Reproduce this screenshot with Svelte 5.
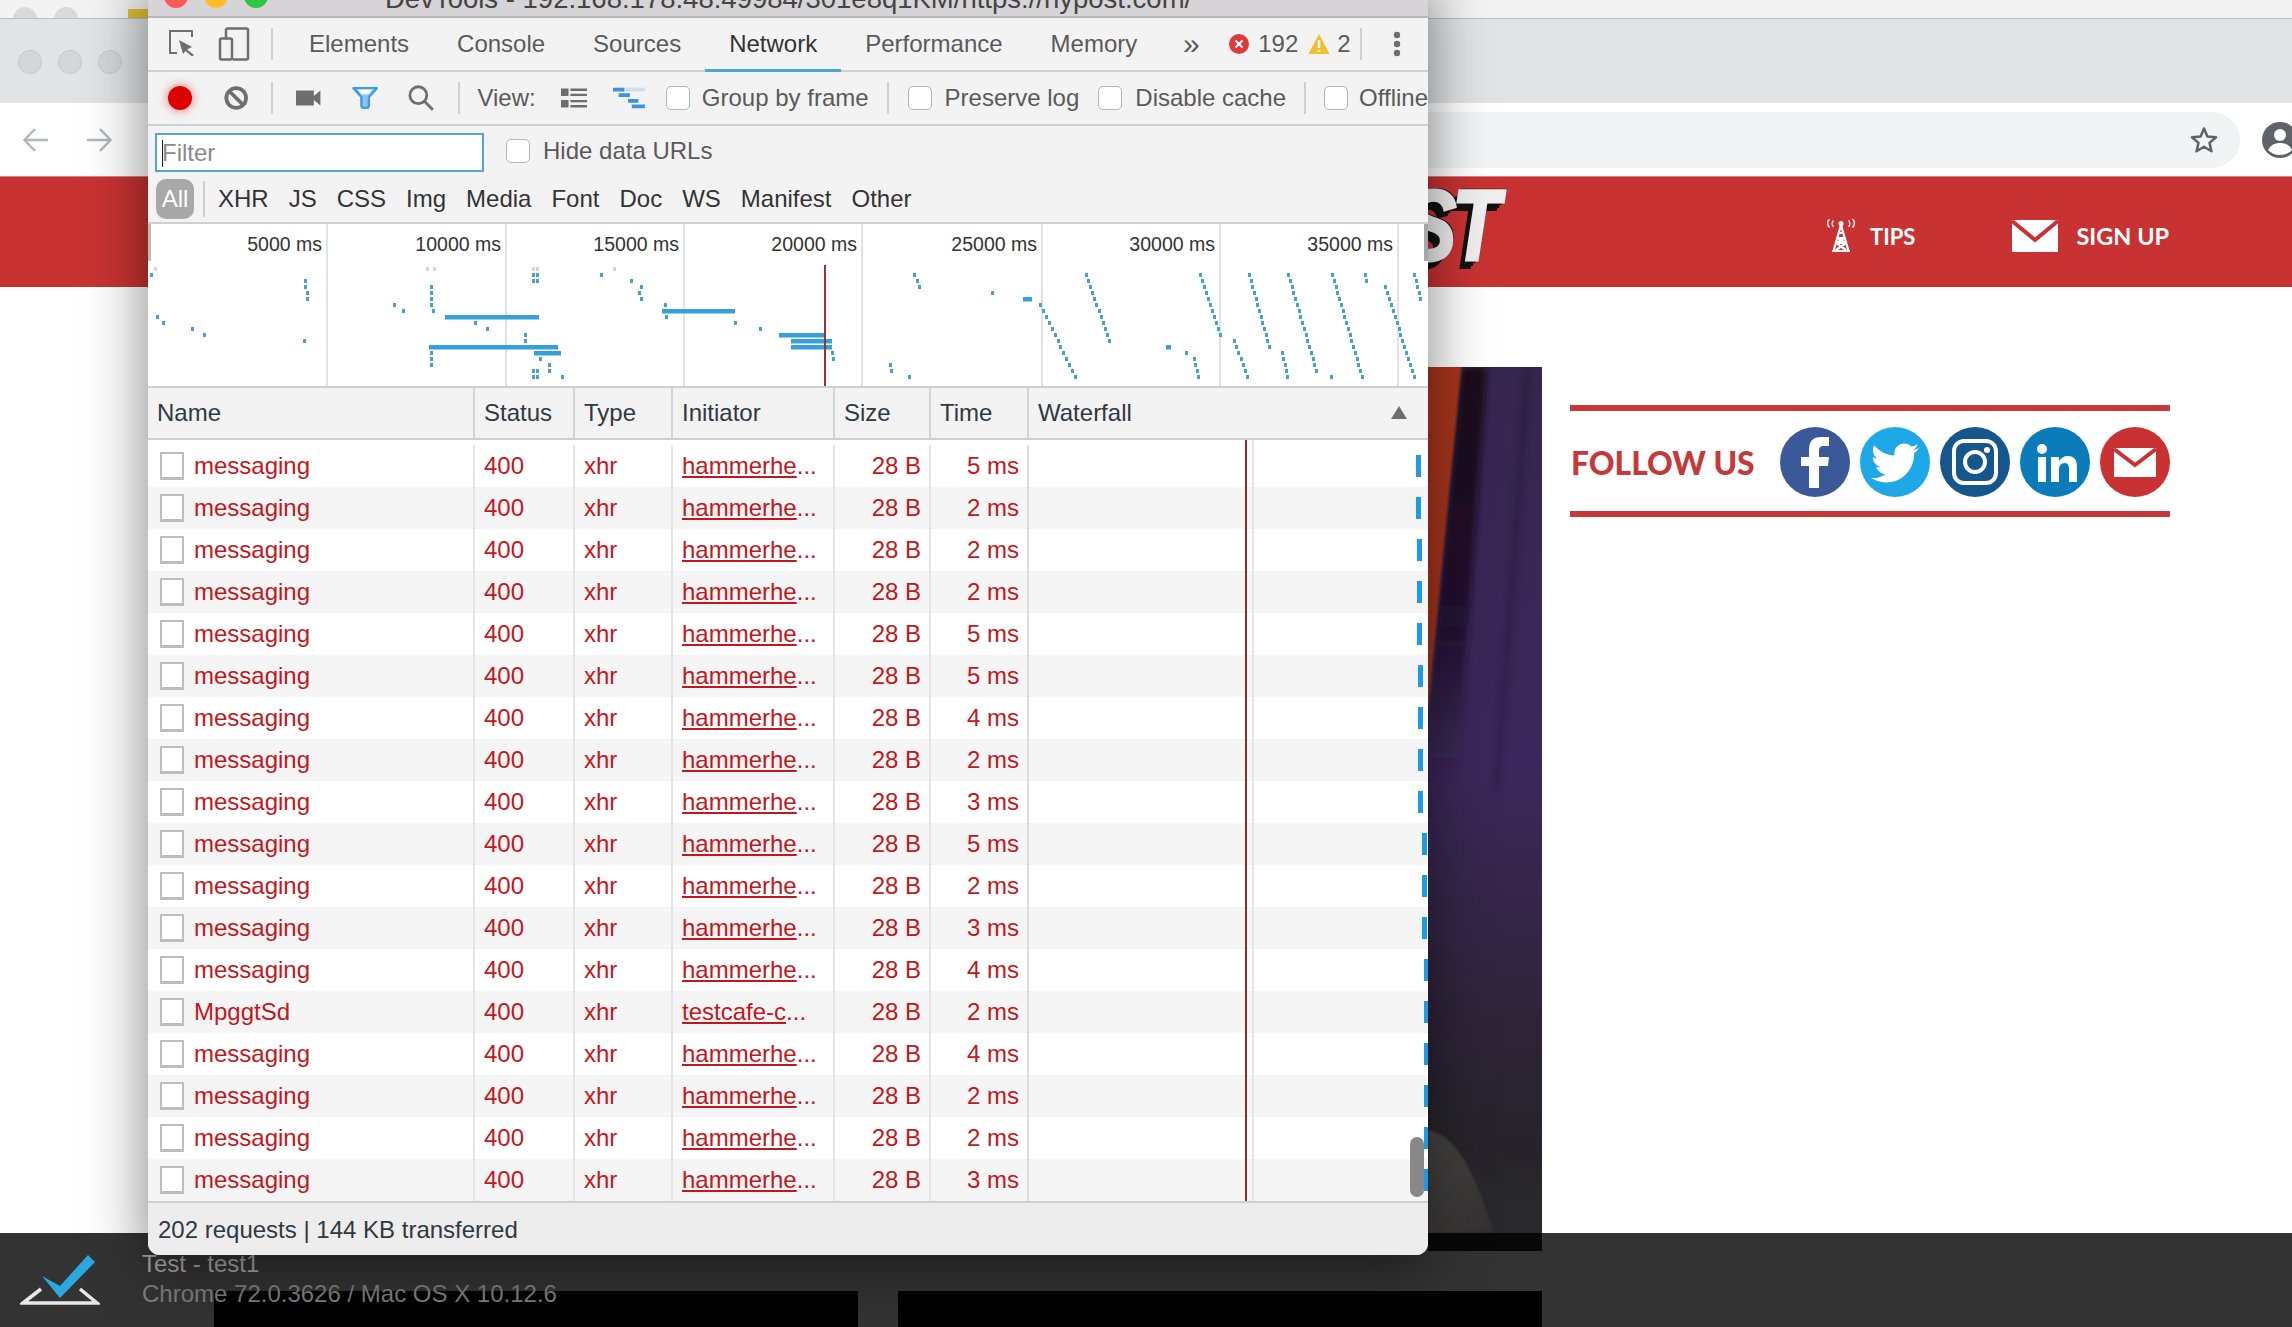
<script>
  const tabs = ["Elements", "Console", "Sources", "Network", "Performance", "Memory"];
  const types = ["XHR", "JS", "CSS", "Img", "Media", "Font", "Doc", "WS", "Manifest", "Other"];
  const times = [5, 2, 2, 2, 5, 5, 4, 2, 3, 5, 2, 3, 4, 2, 4, 2, 2, 3];

  const rows = times.map((time, i) => ({
    name: i === 13 ? "MpggtSd" : "messaging",
    initiator: i === 13 ? "testcafe-c" : "hammerhe",
    time,
    tick: i < 2 ? 1268 : i < 5 ? 1269 : i < 9 ? 1270 : i < 12 ? 1274 : 1276,
  }));

  // overview timeline lanes are 6px apart
  const laneY = (k) => 267 + k * 6;

  // left half of the overview: [lane, page x]
  const leftDots = [
    [1, 150], [1, 532], [1, 536], [1, 600],
    [2, 304], [2, 532], [2, 536], [2, 630],
    [3, 304], [3, 430], [3, 640],
    [4, 306], [4, 430], [4, 638],
    [5, 306], [5, 430], [5, 640],
    [6, 393], [6, 430], [6, 664],
    [7, 402], [7, 432],
    [8, 156], [8, 665],
    [9, 162], [9, 474], [9, 734],
    [10, 191], [10, 486], [10, 759],
    [11, 203], [11, 524],
    [12, 303], [12, 524],
    [14, 430], [14, 831],
    [15, 430], [15, 539], [15, 832],
    [16, 430], [16, 548],
    [17, 532], [17, 536], [17, 548],
    [18, 532], [18, 536], [18, 561],
  ];

  // right half: diagonal runs of requests [x1, lane1, x2, lane2]
  const runs = [
    [913, 1, 918, 3],
    [1085, 1, 1108, 12],
    [1199, 1, 1219, 11],
    [1248, 1, 1268, 13],
    [1287, 1, 1315, 17],
    [1331, 1, 1361, 18],
    [1364, 1, 1365, 2],
    [1384, 3, 1413, 18],
    [1413, 1, 1419, 5],
    [1039, 6, 1074, 18],
    [1233, 12, 1246, 18],
    [1281, 14, 1286, 18],
    [1193, 15, 1197, 18],
    [889, 16, 890, 17],
    [1185, 14, 1185, 14],
    [991, 4, 991, 4],
    [908, 18, 908, 18],
    [1330, 18, 1330, 18],
    [831, 14, 832, 15],
  ];
  const runDots = runs.flatMap(([x1, k1, x2, k2]) => {
    const out = [];
    for (let k = k1; k <= k2; k++) {
      out.push([k, Math.round(x1 + ((x2 - x1) * (k - k1)) / Math.max(k2 - k1, 1))]);
    }
    return out;
  });

  const bars = [
    [7, 662, 735],
    [8, 445, 539],
    [5, 1023, 1032],
    [11, 779, 825],
    [12, 791, 832],
    [13, 429, 558],
    [13, 791, 832],
    [13, 1166, 1171],
    [14, 534, 561],
  ];
  const greyDots = [154, 426, 433, 532, 536, 613];
  const marks = [
    [326, "5000 ms"],
    [505, "10000 ms"],
    [683, "15000 ms"],
    [861, "20000 ms"],
    [1041, "25000 ms"],
    [1219, "30000 ms"],
    [1397, "35000 ms"],
  ];
</script>

<div class="page">
  <div class="back-strip">
    <i class="ghost"></i>
    <i class="ghost"></i>
    <i class="tag"></i>
  </div>
  <div class="tab-strip">
    <i class="light"></i>
    <i class="light"></i>
    <i class="light"></i>
  </div>
  <div class="browser-bar">
    <svg class="nav" viewBox="0 0 28 26"><path d="M26 13H3M13 2 2.500 13 13 24" /></svg>
    <svg class="nav forward" viewBox="0 0 28 26"><path d="M2 13h23M15 2l10.500 11L15 24" /></svg>
    <div class="address">
      <svg class="star" viewBox="0 0 30 30"><path d="M15 3.500l3.400 8 8.600.7-6.500 5.700 2 8.400L15 21.800l-7.500 4.500 2-8.400L3 12.200l8.600-.7z" /></svg>
    </div>
    <svg class="profile" viewBox="0 0 36 36"><circle cx="18" cy="18" r="18" fill="#5f6368" /><circle cx="18" cy="13" r="6" fill="#fff" /><path d="M6 28c3-6 8-7 12-7s9 1 12 7c-3 3-7 5-12 5s-9-2-12-5z" fill="#fff" /></svg>
  </div>

  <header class="site-head">
    <div class="logo">POST</div>
    <svg class="tower" viewBox="0 0 30 34">
      <path class="wave" d="M3.500 1C1 3.500 1 7 3.500 9.500M7.500 2.500c-1.800 1.800-1.800 4.500 0 6.300M26.500 1C29 3.500 29 7 26.500 9.500M22.500 2.500c1.800 1.800 1.800 4.500 0 6.300" />
      <circle cx="15" cy="5.500" r="2.500" fill="#fff" />
      <path class="mast" d="M15 7 7.500 33M15 7l7.500 26M12.500 15h5M11.500 20h7M10 25h10M10 25l10 7M20 25l-10 7M12 20l7 5M18 20l-7 5M6 33h18" />
    </svg>
    <span class="tips">TIPS</span>
    <svg class="envelope" viewBox="0 0 46 32"><path fill="#fff" d="M0 0h46v32H0z" /><path d="M0 1l23 19L46 1" fill="none" stroke="#c93232" stroke-width="4" /></svg>
    <span class="sign-up">SIGN UP</span>
  </header>

  <main class="content">
    <div class="media">
      <svg class="photo" viewBox="1428 367 114 884" preserveAspectRatio="none">
        <defs>
          <linearGradient id="cloth" x1="0" y1="0" x2="0" y2="1">
            <stop offset="0" stop-color="#36264f" />
            <stop offset="0.45" stop-color="#3c285c" />
            <stop offset="0.72" stop-color="#2f243a" />
            <stop offset="0.88" stop-color="#26242a" />
            <stop offset="1" stop-color="#2a2a2c" />
          </linearGradient>
          <linearGradient id="band" x1="0" y1="0" x2="0" y2="1">
            <stop offset="0" stop-color="#1d0b18" />
            <stop offset="0.6" stop-color="#221231" />
            <stop offset="1" stop-color="#2a1e3c" stop-opacity="0" />
          </linearGradient>
          <linearGradient id="fold" x1="0" y1="0" x2="1" y2="1">
            <stop offset="0" stop-color="#484442" />
            <stop offset="1" stop-color="#323133" />
          </linearGradient>
          <filter id="soft"><feGaussianBlur stdDeviation="3" /></filter>
          <filter id="soft-edge"><feGaussianBlur stdDeviation="1" /></filter>
        </defs>
        <rect x="1428" y="367" width="114" height="884" fill="url(#cloth)" />
        <path d="M1461 367h26l-30 420h-29V716z" fill="url(#band)" filter="url(#soft)" />
        <path d="M1420 360h42l-34 350-8 10z" fill="#a8351c" filter="url(#soft-edge)" />
        <path d="M1524 367h8l-32 420h-6z" fill="#1c1530" opacity="0.4" filter="url(#soft)" />
        <path d="M1428 1130c26 6 42 30 66 102l-66 1z" fill="url(#fold)" filter="url(#soft-edge)" />
      </svg>
      <div class="thumbs">
        <div class="thumb"></div>
        <div class="thumb"></div>
      </div>
    </div>

    <aside class="follow">
      <span class="follow-label">FOLLOW US</span>
      <svg class="social fb" viewBox="0 0 70 70"><circle cx="35" cy="35" r="35" /><path fill="#fff" d="M29 61V39h-8v-9h8v-7c0-9 4-13 12-13h8v9h-5c-4 0-5 2-5 5v6h10l-1 9h-9v22z" /></svg>
      <svg class="social tw" viewBox="0 0 70 70"><circle cx="35" cy="35" r="35" /><g transform="translate(11 12) scale(2)"><path fill="#fff" d="M23.954 4.569c-.885.389-1.830.654-2.825.775 1.014-.611 1.794-1.574 2.163-2.723-.951.555-2.005.959-3.127 1.184-.896-.959-2.173-1.559-3.591-1.559-2.717 0-4.920 2.203-4.920 4.917 0 .39.045.765.127 1.124C7.691 8.094 4.066 6.130 1.640 3.161c-.427.722-.666 1.561-.666 2.475 0 1.710.87 3.213 2.188 4.096-.807-.026-1.566-.248-2.228-.616v.061c0 2.385 1.693 4.374 3.946 4.827-.413.111-.849.171-1.296.171-.314 0-.615-.03-.916-.086.631 1.953 2.445 3.377 4.604 3.417-1.680 1.319-3.809 2.105-6.102 2.105-.39 0-.779-.023-1.170-.067 2.189 1.394 4.768 2.209 7.557 2.209 9.054 0 13.999-7.496 13.999-13.986 0-.209 0-.42-.015-.63.961-.689 1.800-1.560 2.460-2.548l-.047-.02z" /></g></svg>
      <svg class="social ig" viewBox="0 0 70 70"><circle cx="35" cy="35" r="35" /><g fill="none" stroke="#fff" stroke-width="4"><rect x="14" y="14" width="42" height="42" rx="10" /><circle cx="35" cy="35" r="10" /></g><circle cx="47" cy="23" r="3" fill="#fff" /></svg>
      <svg class="social li" viewBox="0 0 70 70"><circle cx="35" cy="35" r="35" /><g fill="#fff"><circle cx="22" cy="22" r="5" /><rect x="18" y="30" width="8" height="25" /><path d="M31 30h8v4c2-3 5-5 9-5 7 0 9 5 9 11v15h-8V42c0-3-1-6-4-6-4 0-6 3-6 6v13h-8z" /></g></svg>
      <svg class="social ml" viewBox="0 0 70 70"><circle cx="35" cy="35" r="35" /><path fill="#fff" d="M14 21h42v29H14z" /><path d="M14 22l21 16 21-16" fill="none" stroke="#c93232" stroke-width="4" /></svg>
    </aside>
  </main>

  <div class="run-bar">
    <svg class="run-logo" viewBox="0 0 80 50">
      <path d="M21 34 3 48h74L60 34" fill="none" stroke="#e8e8e8" stroke-width="3.500" />
      <path d="M22 21 40 31 68 0l7 7-35 36z" fill="#2ba8e0" />
    </svg>
    <div class="run-text">
      <div class="run-name">Test - test1</div>
      <div class="run-browser">Chrome 72.0.3626 / Mac OS X 10.12.6</div>
    </div>
  </div>

  <section class="devtools">
    <div class="title-bar">
      <i class="dot red"></i>
      <i class="dot amber"></i>
      <i class="dot green"></i>
      <span class="title">DevTools - 192.168.178.48:49984/301e8q1KM/https://nypost.com/</span>
    </div>

    <nav class="tab-row">
      <svg class="inspect" viewBox="0 0 28 30">
        <path d="M9 24H2V2h22v6" fill="none" stroke="#6e6e6e" stroke-width="2" stroke-linejoin="round" />
        <path d="M11 11l13 7-5 2.500 7 5.500-2 1.500-6.500-5.500-2.500 3z" fill="#6e6e6e" />
      </svg>
      <svg class="device" viewBox="0 0 32 34">
        <path d="M8 11V3c0-.8.6-1.500 1.500-1.500h19c.8 0 1.500.7 1.500 1.500v28c0 .8-.7 1.500-1.500 1.500H15" fill="none" stroke="#6e6e6e" stroke-width="2.500" />
        <rect x="2" y="11.500" width="12" height="21" rx="1.500" fill="none" stroke="#6e6e6e" stroke-width="2.500" />
      </svg>
      <i class="sep first"></i>
      {#each tabs as tab}
        <span class="tab" class:active={tab === "Network"}>{tab}</span>
      {/each}
      <span class="more">»</span>
      <svg class="err" viewBox="0 0 20 20"><circle cx="10" cy="10" r="10" fill="#e0393c" /><path d="M6.500 6.500l7 7m0-7l-7 7" stroke="#fff" stroke-width="2" /></svg>
      <span class="count">192</span>
      <svg class="warn" viewBox="0 0 22 22"><path d="M11 1 21.500 21H.5z" fill="#f4bd2a" /><path d="M11 7v8m0 2v2" stroke="#fff" stroke-width="2.500" /></svg>
      <span class="count warned">2</span>
      <i class="sep after-count"></i>
      <svg class="kebab" viewBox="0 0 8 26"><circle cx="4" cy="4" r="3.200" /><circle cx="4" cy="13" r="3.200" /><circle cx="4" cy="22" r="3.200" /></svg>
    </nav>

    <div class="tool-row">
      <i class="record"></i>
      <svg class="clear" viewBox="0 0 26 26"><circle cx="13" cy="13" r="10.500" /><path d="M5.500 5.500l15 15" /></svg>
      <i class="sep s1"></i>
      <svg class="camera" viewBox="0 0 26 16"><path d="M0 0h19v16H0zM19 6l7-6v16l-7-6z" fill="#6e6e6e" /></svg>
      <svg class="filter" viewBox="0 0 28 24"><path d="M1.500 1.500h25L18 11v9c0 1.500-1 2.500-2.500 2.500h-3C11 22.500 10 21.500 10 20v-9z" fill="#8cc4f5" stroke="#3f9be8" stroke-width="2.500" stroke-linejoin="round" /><path d="M6 3h16l-4 5h-8z" fill="#fff" /></svg>
      <svg class="search" viewBox="0 0 28 28"><circle cx="11" cy="11" r="9" /><path d="M17.500 17.500l9 9" /></svg>
      <i class="sep s2"></i>
      <span class="view-label">View:</span>
      <svg class="list-view" viewBox="0 0 28 20" fill="#6e6e6e"><path d="M0 0h8v8H0zM0 12h8v8H0zM10 0h18v2.500H10zM10 5.500h18V8H10zM10 12h18v2.500H10zM10 17.500h18V20H10z" /></svg>
      <svg class="fall-view" viewBox="0 0 34 22"><path d="M12 0h22v4H12z" fill="#c9dff2" /><path d="M0 0h12v4H0zM6 6h12v4H6zM16 12h11v4H16zM20 18h14v4H20z" fill="#3f93d8" /></svg>
      <label class="check group"><i class="box"></i>Group by frame</label>
      <i class="sep s3"></i>
      <label class="check preserve"><i class="box"></i>Preserve log</label>
      <label class="check disable"><i class="box"></i>Disable cache</label>
      <i class="sep s4"></i>
      <label class="check offline"><i class="box"></i>Offline</label>
    </div>

    <div class="filter-row">
      <div class="filter-input"><i class="caret"></i>Filter</div>
      <label class="check hide-urls"><i class="box"></i>Hide data URLs</label>
    </div>

    <div class="type-row">
      <span class="all">All</span>
      <i class="sep s5"></i>
      {#each types as type}
        <span class="type">{type}</span>
      {/each}
    </div>

    <svg class="overview" viewBox="148 224 1280 162">
      <rect x="148" y="224" width="1280" height="162" fill="#fff" />
      <rect x="148" y="224" width="3" height="37" fill="#b9b9b9" />
      <rect x="1424" y="224" width="4" height="37" fill="#a6a6a6" />
      {#each marks as [x, label]}
        <rect {x} y="224" width="2" height="162" fill="#e2e2e2" />
        <text x={x - 4} y="251" text-anchor="end">{label}</text>
      {/each}
      {#each greyDots as x}
        <rect {x} y="267" width="3" height="4" fill="#d6d6d6" />
      {/each}
      {#each leftDots as [k, x]}
        <rect {x} y={laneY(k)} width="3" height="4" fill="#45a3c6" />
      {/each}
      {#each runDots as [k, x]}
        <rect {x} y={laneY(k)} width="3" height="4" fill="#45a3c6" />
      {/each}
      {#each bars as [k, from, to]}
        <rect x={from} y={laneY(k)} width={to - from} height="4.500" fill="#37a0d9" />
      {/each}
      <rect x="824" y="265" width="2" height="121" fill="#9b2f31" />
    </svg>

    <div class="grid head">
      <span>Name</span>
      <span>Status</span>
      <span>Type</span>
      <span>Initiator</span>
      <span>Size</span>
      <span>Time</span>
      <span class="fall-head">Waterfall<i class="sort"></i></span>
    </div>

    <div class="table-body">
      {#each rows as row}
        <div class="grid row">
          <span class="name-cell"><i class="doc"></i>{row.name}</span>
          <span>400</span>
          <span>xhr</span>
          <span><u>{row.initiator}</u>...</span>
          <span class="num">28 B</span>
          <span class="num">{row.time} ms</span>
          <span class="fall-cell"><i class="tick" style="left: {row.tick - 881}px"></i></span>
        </div>
      {/each}
      <i class="load-line"></i>
      <i class="dom-line"></i>
      <i class="scroll-thumb"></i>
    </div>

    <footer class="status-bar">202 requests | 144 KB transferred</footer>
  </section>
</div>

<style>
  :global(body) {
    margin: 0;
    font-family: "Liberation Sans", Arial, sans-serif;
  }

  i {
    display: block;
    flex: none;
  }

  .page {
    position: relative;
    display: flex;
    flex-direction: column;
    width: 2292px;
    height: 1327px;
    overflow: hidden;
    background: #fff;
  }

  .back-strip {
    display: flex;
    flex: none;
    box-sizing: border-box;
    height: 19px;
    padding: 7px 0 0 13px;
    gap: 17px;
    overflow: hidden;
    background: #f3f3f3;
    border-bottom: 1px solid #bdbdbd;
  }

  .ghost {
    width: 24px;
    height: 24px;
    border-radius: 50%;
    background: #d9d9d9;
  }

  .tag {
    width: 30px;
    height: 12px;
    margin: 2px 0 0 33px;
    background: #e0c234;
  }

  .tab-strip {
    display: flex;
    flex: none;
    box-sizing: border-box;
    height: 84px;
    padding: 31px 0 0 18px;
    gap: 16px;
    background: #e0e4e7;
  }

  .light {
    box-sizing: border-box;
    width: 24px;
    height: 24px;
    border-radius: 50%;
    background: #d4d6d8;
    border: 1px solid #c6c8ca;
  }

  .browser-bar {
    display: flex;
    flex: none;
    align-items: center;
    height: 73px;
    padding-left: 22px;
  }

  .nav {
    width: 28px;
    height: 26px;
    fill: none;
    stroke: #b3b6b9;
    stroke-width: 2.500;
  }

  .forward {
    margin-left: 35px;
  }

  .address {
    display: flex;
    flex: 1;
    align-items: center;
    justify-content: flex-end;
    height: 56px;
    margin-left: 60px;
    padding-right: 21px;
    background: #f1f3f4;
    border-radius: 28px;
  }

  .star {
    width: 30px;
    height: 30px;
    fill: none;
    stroke: #5f6368;
    stroke-width: 2.500;
    stroke-linejoin: round;
  }

  .profile {
    flex: none;
    width: 36px;
    height: 36px;
    margin: 0 -6px 0 22px;
  }

  .site-head {
    display: flex;
    flex: none;
    align-items: center;
    box-sizing: border-box;
    height: 111px;
    background: #c93232;
    border-top: 1px solid #dd8080;
  }

  .logo {
    width: 320px;
    margin: 0 0 14px 1176px;
    text-align: right;
    font-size: 100px;
    font-weight: 700;
    font-style: italic;
    letter-spacing: -5px;
    line-height: 90px;
    color: #f0f0f0;
    -webkit-text-stroke: 3px #f0f0f0;
    text-shadow:
      2px -2px 0 #111,
      -3px 3px 0 #111,
      -6px 6px 0 #111,
      -9px 9px 0 #111;
    transform: scaleX(0.78);
    transform-origin: right center;
  }

  .tower {
    width: 30px;
    height: 34px;
    margin: 6px 0 0 330px;
  }

  .wave {
    fill: none;
    stroke: #fff;
    stroke-width: 1.400;
  }

  .mast {
    fill: none;
    stroke: #fff;
    stroke-width: 2.200;
  }

  .tips,
  .sign-up {
    font-family: Lato, "Liberation Sans", sans-serif;
    font-weight: 700;
    color: #fff;
    font-size: 22px;
  }

  .tips {
    margin: 8px 0 0 14px;
  }

  .envelope {
    width: 46px;
    height: 32px;
    margin: 8px 0 0 97px;
  }

  .sign-up {
    margin: 8px 0 0 18px;
    font-size: 23.500px;
  }

  .content {
    display: flex;
    flex: 1;
    min-height: 0;
    padding: 80px 0 0 214px;
    background: #fff;
  }

  .media {
    display: flex;
    flex-direction: column;
    flex: none;
    width: 1328px;
    align-items: flex-end;
    gap: 40px;
  }

  .photo {
    flex: none;
    width: 114px;
    height: 884px;
  }

  .thumbs {
    display: flex;
    gap: 40px;
  }

  .thumb {
    width: 644px;
    height: 120px;
    background: #000;
  }

  .follow {
    display: flex;
    align-items: center;
    box-sizing: border-box;
    width: 600px;
    height: 112px;
    margin: 38px 0 0 28px;
    padding-top: 2px;
    gap: 10px;
    border-top: 6px solid #c5393a;
    border-bottom: 6px solid #c5393a;
  }

  .follow-label {
    box-sizing: border-box;
    width: 205px;
    padding: 2px 0 0 1px;
    font-family: Lato, "Liberation Sans", sans-serif;
    font-weight: 900;
    font-size: 31.800px;
    white-space: nowrap;
    color: #c5393a;
  }

  .social {
    width: 70px;
    height: 70px;
    flex: none;
  }

  .fb { fill: #3b5998; }
  .tw { fill: #1ea8e8; }
  .ig { fill: #15568c; }
  .li { fill: #0a7cba; }
  .ml { fill: #c93232; }

  .run-bar {
    position: absolute;
    left: 0;
    right: 0;
    bottom: 0;
    display: flex;
    height: 94px;
    background: rgba(0, 0, 0, 0.8);
  }

  .run-logo {
    flex: none;
    width: 80px;
    height: 50px;
    margin: 22px 0 0 20px;
  }

  .run-text {
    margin-left: 42px;
    padding-top: 16px;
    font-size: 24px;
    line-height: 30px;
  }

  .run-name {
    color: #a8a8a8;
  }

  .run-browser {
    color: #7e7e7e;
  }

  .devtools {
    position: absolute;
    left: 148px;
    top: -30px;
    display: flex;
    flex-direction: column;
    width: 1280px;
    height: 1285px;
    overflow: hidden;
    font-size: 24px;
    color: #5a5a5a;
    background: #f3f3f3;
    border-radius: 12px;
    box-shadow: 0 12px 60px rgba(0, 0, 0, 0.5);
  }

  .title-bar {
    position: relative;
    display: flex;
    flex: none;
    align-items: center;
    box-sizing: border-box;
    height: 48px;
    padding: 6px 0 0 16px;
    gap: 16px;
    background: #d6d4d6;
    border-bottom: 2px solid #b8b8b8;
  }

  .dot {
    width: 24px;
    height: 24px;
    border-radius: 50%;
  }

  .red { background: #fc5b57; }
  .amber { background: #febb2c; }
  .green { background: #2ac83f; }

  .title {
    margin: 6px 0 0 101px;
    font-size: 27.500px;
    white-space: nowrap;
    color: #444;
  }

  .tab-row,
  .tool-row {
    display: flex;
    flex: none;
    align-items: center;
    box-sizing: border-box;
    height: 54px;
    border-bottom: 2px solid #cfcfcf;
    white-space: nowrap;
  }

  .inspect {
    width: 28px;
    height: 30px;
    margin-left: 20px;
  }

  .device {
    width: 32px;
    height: 34px;
    margin-left: 22px;
  }

  .sep {
    width: 2px;
    height: 32px;
    background: #cfcfcf;
  }

  .sep.first {
    margin: 0 12px 0 21px;
  }

  .tab {
    align-self: stretch;
    box-sizing: border-box;
    padding: 0 24px;
    margin-bottom: -2px;
    line-height: 52px;
    font-size: 24px;
  }

  .active {
    color: #333;
    border-bottom: 3px solid #4ba6dc;
  }

  .more {
    width: 30px;
    margin-left: 15px;
    font-size: 30px;
    line-height: 40px;
    text-align: center;
    color: #5a5a5a;
  }

  .err {
    width: 20px;
    height: 20px;
    margin-left: 23px;
  }

  .count {
    margin-left: 9px;
    font-size: 24px;
  }

  .warn {
    width: 22px;
    height: 22px;
    margin-left: 10px;
  }

  .warned {
    margin-left: 7px;
  }

  .sep.after-count {
    margin-left: 9px;
  }

  .kebab {
    width: 8px;
    height: 26px;
    margin-left: 31px;
    fill: #6e6e6e;
  }

  .record {
    width: 24px;
    height: 24px;
    margin-left: 20px;
    border-radius: 50%;
    background: #dc0000;
    box-shadow: 0 0 8px 2px rgba(220, 0, 0, 0.35);
  }

  .clear {
    width: 26px;
    height: 26px;
    margin-left: 32px;
    fill: none;
    stroke: #6e6e6e;
    stroke-width: 4;
  }

  .sep.s1 { margin-left: 23px; }
  .sep.s2 { margin-left: 24px; }
  .sep.s3 { margin-left: 18px; }
  .sep.s4 { margin-left: 18px; }

  .camera {
    width: 26px;
    height: 16px;
    margin-left: 23px;
  }

  .filter {
    width: 28px;
    height: 24px;
    margin-left: 31px;
  }

  .search {
    width: 28px;
    height: 28px;
    margin-left: 30px;
    fill: none;
    stroke: #6e6e6e;
    stroke-width: 3;
  }

  .view-label {
    margin-left: 17px;
    font-size: 24px;
  }

  .list-view {
    width: 28px;
    height: 20px;
    margin-left: 25px;
  }

  .fall-view {
    width: 34px;
    height: 22px;
    margin-left: 26px;
  }

  .check {
    display: flex;
    align-items: center;
    font-size: 24px;
    gap: 13px;
  }

  .box {
    box-sizing: border-box;
    width: 24px;
    height: 24px;
    background: #fff;
    border: 1.500px solid #b5b5b5;
    border-radius: 5px;
  }

  .group { margin-left: 21px; gap: 12px; }
  .preserve { margin-left: 19px; }
  .disable { margin-left: 19px; }
  .offline { margin-left: 18px; gap: 11px; }

  .filter-row {
    display: flex;
    flex: none;
    align-items: center;
    box-sizing: border-box;
    height: 52px;
    padding: 0 0 2px 7px;
  }

  .filter-input {
    display: flex;
    align-items: center;
    box-sizing: border-box;
    width: 329px;
    height: 39px;
    margin-top: 2px;
    padding: 2px 0 0 5px;
    color: #8a8a8a;
    background: #fff;
    border: 2px solid #55a7cf;
  }

  .caret {
    width: 1px;
    height: 27px;
    margin-right: -1px;
    background: #222;
  }

  .hide-urls {
    margin-left: 22px;
  }

  .type-row {
    display: flex;
    flex: none;
    align-items: center;
    box-sizing: border-box;
    height: 46px;
    padding: 0 0 2px 8px;
    gap: 20px;
    color: #333;
    border-bottom: 2px solid #cfcfcf;
  }

  .all {
    width: 38px;
    height: 40px;
    margin-right: -11px;
    line-height: 40px;
    text-align: center;
    color: #fff;
    background: #a8a8a8;
    border-radius: 10px;
  }

  .sep.s5 {
    height: 36px;
    margin-right: -7px;
  }

  .overview {
    display: block;
    flex: none;
    width: 1280px;
    height: 162px;
  }

  .overview text {
    font-size: 19.500px;
    fill: #333;
  }

  .grid {
    display: grid;
    flex: none;
    grid-template-columns: 327px 100px 98px 162px 96px 98px 399px;
  }

  .grid > span {
    box-sizing: border-box;
    padding-left: 9px;
    border-right: 2px solid #e4e4e4;
    white-space: nowrap;
  }

  .head {
    box-sizing: border-box;
    height: 54px;
    line-height: 50px;
    color: #303942;
    background: #f3f3f3;
    border-top: 2px solid #cfcfcf;
    border-bottom: 2px solid #cfcfcf;
  }

  .head > span {
    border-right-color: #d4d4d4;
  }

  .fall-head {
    position: relative;
    border-right: 0 !important;
  }

  .sort {
    position: absolute;
    top: 18px;
    right: 21px;
    width: 0;
    height: 0;
    border-left: 8px solid transparent;
    border-right: 8px solid transparent;
    border-bottom: 13px solid #6e6e6e;
  }

  .table-body {
    position: relative;
    flex: none;
    height: 756px;
    padding-top: 5px;
    background: #fff;
  }

  .row {
    height: 42px;
    line-height: 42px;
    color: #c4161c;
    background: #fff;
  }

  .row:nth-child(even) {
    background: #f5f5f5;
  }

  .name-cell {
    display: flex;
    align-items: center;
    padding-left: 12px !important;
  }

  .doc {
    box-sizing: border-box;
    width: 24px;
    height: 28px;
    margin-right: 10px;
    background: #fff;
    border: 2px solid #bdbdbd;
    border-bottom-width: 3px;
  }

  .num {
    padding: 0 8px 0 0 !important;
    text-align: right;
  }

  .fall-cell {
    position: relative;
    border-right: 0 !important;
    border-left: 2px solid #dcdcdc;
    margin-left: -2px;
    overflow: hidden;
  }

  .tick {
    position: absolute;
    top: 10px;
    width: 5px;
    height: 22px;
    background: #1d9be6;
  }

  .load-line,
  .dom-line {
    position: absolute;
    top: 0;
    bottom: 0;
    width: 2px;
  }

  .load-line {
    left: 1097px;
    background: #8f2c2e;
  }

  .dom-line {
    left: 1104px;
    background: #e4e4e4;
  }

  .scroll-thumb {
    position: absolute;
    left: 1262px;
    bottom: 4px;
    width: 14px;
    height: 60px;
    background: #888;
    border-radius: 7px;
  }

  .status-bar {
    flex: none;
    box-sizing: border-box;
    height: 54px;
    padding-left: 10px;
    line-height: 54px;
    color: #303942;
    background: #ededed;
    border-top: 2px solid #cfcfcf;
  }
</style>
